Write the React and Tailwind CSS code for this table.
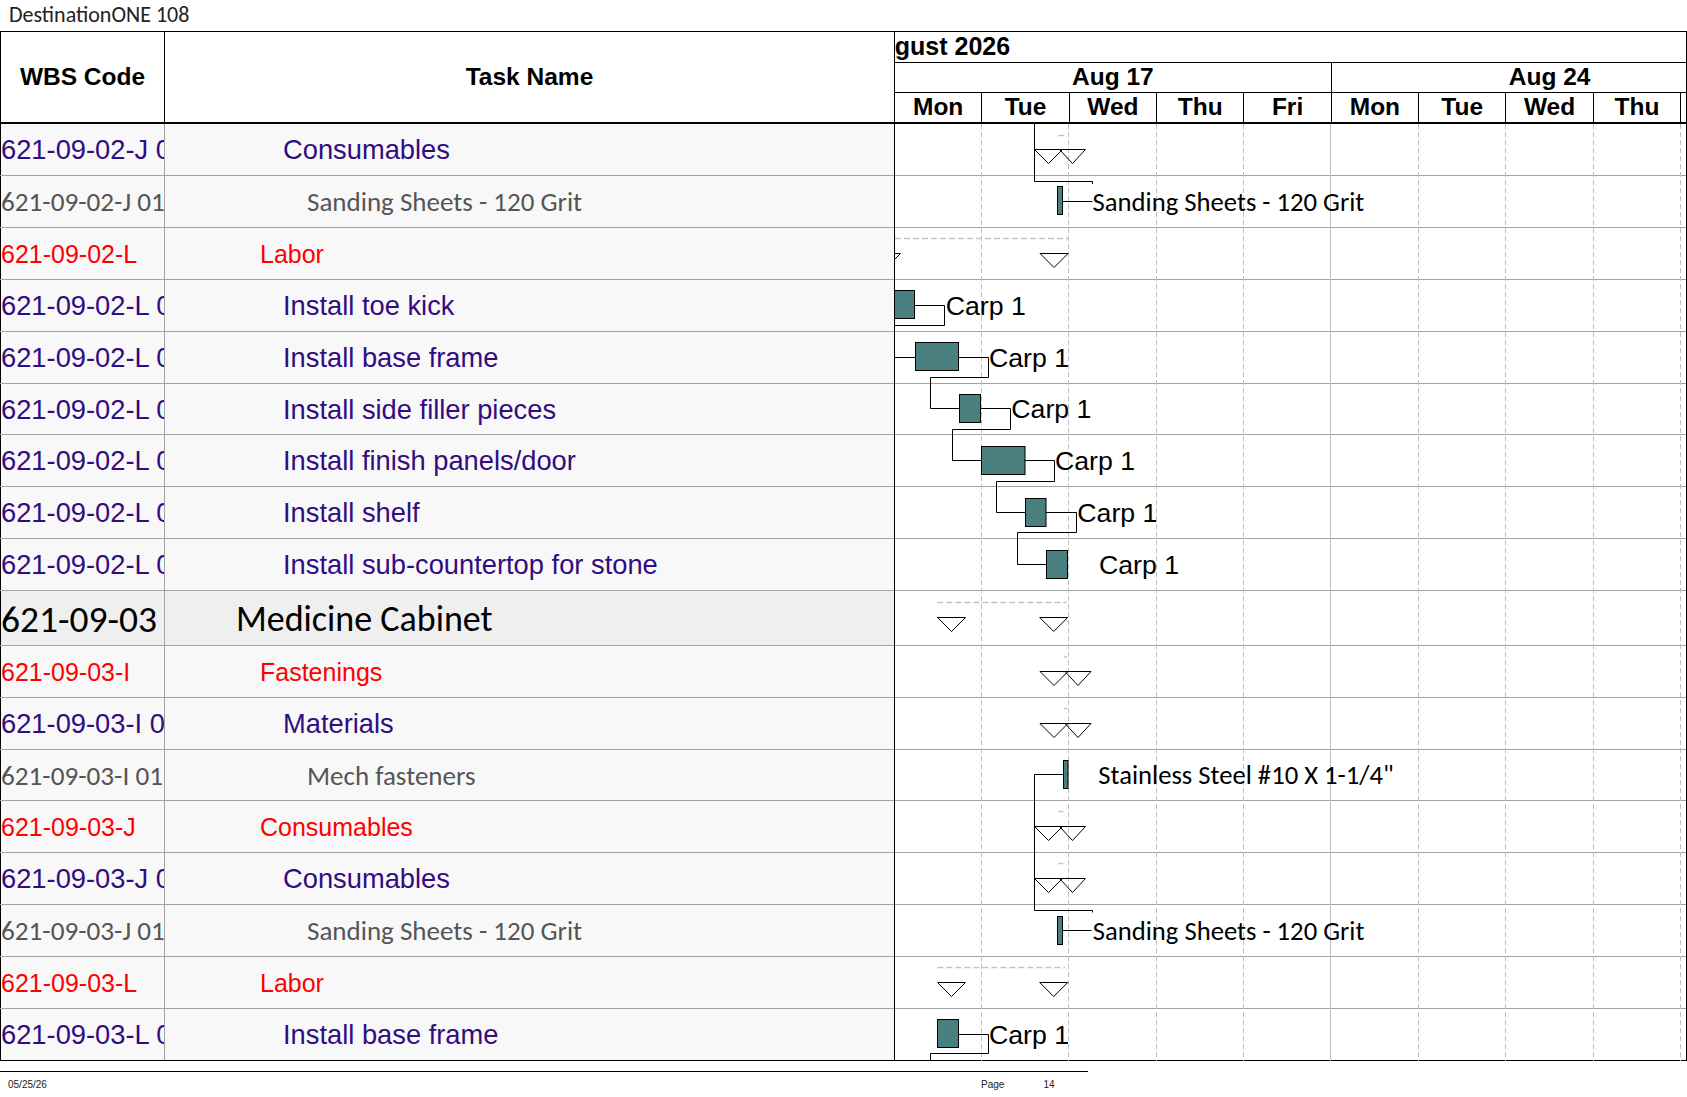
import React from "react";

const arial = "font-['Liberation_Sans',Arial,sans-serif]";
const calibri = "font-['Carlito','Lato',sans-serif]";

const kinds = {
  p: {
    text: `${arial} text-[27.3px] text-[#320c80]`,
    code: `${arial} text-[27.3px] text-[#320c80]`,
    pl: "pl-[118px]",
    bg: "bg-[#f8f8f8]",
  },
  r: {
    text: `${arial} text-[25px] text-[#ff0000]`,
    code: `${arial} text-[25px] text-[#ff0000]`,
    pl: "pl-[95px]",
    bg: "bg-[#f8f8f8]",
  },
  g: {
    text: `${calibri} text-[27px] text-[#555555]`,
    code: `${calibri} text-[27.2px] text-[#555555]`,
    pl: "pl-[142px]",
    bg: "bg-[#f8f8f8]",
  },
  m: {
    text: `${calibri} text-[36px] text-black`,
    code: `${calibri} text-[37.5px] text-black`,
    pl: "pl-[71px]",
    bg: "bg-[#efefef]",
  },
};

const rows = [
  { code: "621-09-02-J 01", name: "Consumables", k: "p", h: "h-[52px]" },
  { code: "621-09-02-J 01 01", name: "Sanding Sheets - 120 Grit", k: "g", h: "h-[52px]" },
  { code: "621-09-02-L", name: "Labor", k: "r", h: "h-[52px]" },
  { code: "621-09-02-L 01", name: "Install toe kick", k: "p", h: "h-[52px]" },
  { code: "621-09-02-L 02", name: "Install base frame", k: "p", h: "h-[52px]" },
  { code: "621-09-02-L 03", name: "Install side filler pieces", k: "p", h: "h-[51px]" },
  { code: "621-09-02-L 04", name: "Install finish panels/door", k: "p", h: "h-[52px]" },
  { code: "621-09-02-L 05", name: "Install shelf", k: "p", h: "h-[52px]" },
  { code: "621-09-02-L 06", name: "Install sub-countertop for stone", k: "p", h: "h-[52px]" },
  { code: "621-09-03", name: "Medicine Cabinet", k: "m", h: "h-[55px]" },
  { code: "621-09-03-I", name: "Fastenings", k: "r", h: "h-[52px]" },
  { code: "621-09-03-I 01", name: "Materials", k: "p", h: "h-[52px]" },
  { code: "621-09-03-I 01 01", name: "Mech fasteners", k: "g", h: "h-[51px]" },
  { code: "621-09-03-J", name: "Consumables", k: "r", h: "h-[52px]" },
  { code: "621-09-03-J 01", name: "Consumables", k: "p", h: "h-[52px]" },
  { code: "621-09-03-J 01 01", name: "Sanding Sheets - 120 Grit", k: "g", h: "h-[52px]" },
  { code: "621-09-03-L", name: "Labor", k: "r", h: "h-[52px]" },
  { code: "621-09-03-L 01", name: "Install base frame", k: "p", h: "h-[52px]" },
];

const days = ["Mon", "Tue", "Wed", "Thu", "Fri", "Mon", "Tue", "Wed", "Thu", "Fri"];
const gridX = [86.5, 173.5, 261.5, 348.5, 523.5, 610.5, 698.5, 785.5];

// summary marker
const Tri = ({ x, y, w = 28 }) => (
  <polygon points={`${x},${y} ${x + w},${y} ${x + w / 2},${y + 14}`} fill="none" stroke="#000" strokeWidth="1" />
);

const Bar = ({ x, y, w, h = 28 }) => (
  <rect x={x} y={y} width={w} height={h} fill="#4a7f7f" stroke="#000" strokeWidth="1" />
);

const Line = ({ pts }) => <polyline points={pts} fill="none" stroke="#000" strokeWidth="1" />;

const Dash = ({ x1, x2, y }) => (
  <line x1={x1} x2={x2} y1={y} y2={y} stroke="#c4c4c4" strokeWidth="1.5" strokeDasharray="6 3" />
);

const Carp = ({ x, y }) => (
  <text x={x} y={y} className={`${arial} text-[26.7px]`} fill="#000">
    Carp 1
  </text>
);

const Note = ({ x, y, children }) => (
  <text x={x} y={y} className={`${calibri} text-[26.67px]`} fill="#000">
    {children}
  </text>
);

const Chart = () => (
  <svg className="absolute left-0 top-0" width="791" height="937">
    {gridX.map((x) => (
      <line key={x} x1={x} x2={x} y1="0" y2="937" stroke="#bdbdbd" strokeWidth="1" strokeDasharray="5 3" />
    ))}
    <line x1="435.5" x2="435.5" y1="0" y2="937" stroke="#bdbdbd" strokeWidth="1" />

    {/* 621-09-02-J */}
    <Line pts="139.5,0 139.5,57.5 197.5,57.5 197.5,60" />
    <Dash x1={163} x2={169} y={11.5} />
    <Tri x={139.5} y={25.5} />
    <Tri x={164.5} y={25.5} w={26} />
    <Bar x={162.5} y={62.5} w={5} />
    <Line pts="167.5,77.5 197.5,77.5" />
    <Note x={197.6} y={86.7}>Sanding Sheets - 120 Grit</Note>

    {/* Labor */}
    <Dash x1={0} x2={173.5} y={114.5} />
    <Tri x={-22.5} y={129.5} />
    <Tri x={145} y={129.5} />

    <Bar x={-10} y={166.5} w={29.5} />
    <Line pts="19.5,181.5 49.5,181.5 49.5,201.5 -2,201.5" />
    <Carp x={50.7} y={191} />

    <Line pts="0,233.5 20.5,233.5" />
    <Bar x={20.5} y={218.5} w={43} />
    <Line pts="63.5,233.5 93.5,233.5 93.5,253.5 35.5,253.5 35.5,284.5 64.5,284.5" />
    <Carp x={94} y={243} />

    <Bar x={64.5} y={270.5} w={21} />
    <Line pts="85.5,284.5 115.5,284.5 115.5,305.5 57.5,305.5 57.5,336.5 86.5,336.5" />
    <Carp x={116.3} y={294} />

    <Bar x={86.5} y={322.5} w={43.5} />
    <Line pts="130,336.5 159.5,336.5 159.5,357.5 101.5,357.5 101.5,388.5 130.5,388.5" />
    <Carp x={160} y={346} />

    <Bar x={130.5} y={374.5} w={20.5} />
    <Line pts="151,388.5 181.5,388.5 181.5,408.5 122.5,408.5 122.5,440.5 151.5,440.5" />
    <Carp x={182.3} y={398} />

    <Bar x={151.5} y={426.5} w={21} />
    <Carp x={204} y={450} />

    {/* Medicine Cabinet */}
    <Dash x1={42.3} x2={171.7} y={478.5} />
    <Tri x={42.5} y={493.5} />
    <Tri x={144.7} y={493.5} />

    <Dash x1={169} x2={172} y={533} />
    <Tri x={145} y={547.5} />
    <Tri x={170} y={547.5} w={26} />

    <Dash x1={169} x2={172} y={584.5} />
    <Tri x={145} y={599.5} />
    <Tri x={170} y={599.5} w={26} />

    <Line pts="139.5,650.5 168.5,650.5" />
    <Bar x={168.5} y={636.5} w={4.5} />
    <Line pts="139.5,650.5 139.5,786.5 197.5,786.5 197.5,788.5" />
    <Note x={203.3} y={660.3}>Stainless Steel #10 X 1-1/4"</Note>

    <Dash x1={163.3} x2={168.3} y={687.5} />
    <Tri x={139.5} y={702.5} />
    <Tri x={164.5} y={702.5} w={26} />

    <Dash x1={163.3} x2={168.3} y={739.5} />
    <Tri x={139.5} y={754.5} />
    <Tri x={164.5} y={754.5} w={26} />

    <Bar x={162.5} y={792.5} w={5} />
    <Line pts="167.5,806.5 196.5,806.5" />
    <Note x={197.7} y={816}>Sanding Sheets - 120 Grit</Note>

    <Dash x1={42.3} x2={170.3} y={843.5} />
    <Tri x={42.5} y={858.5} />
    <Tri x={144.7} y={858.5} />

    <Bar x={42.5} y={895.5} w={21} />
    <Line pts="63.5,910.5 93.5,910.5 93.5,929.5 35.5,929.5 35.5,937" />
    <Carp x={94} y={920} />
  </svg>
);

export default function App() {
  return (
    <div className="w-[1687px] h-[1097px] bg-white overflow-hidden text-black">
      <div className={`h-[31px] pl-[9px] pt-[3px] text-[22px] leading-[24px] text-[#222] ${calibri}`}>
        DestinationONE 108
      </div>

      {/* header */}
      <div className={`flex h-[93px] border-t border-b-2 border-black font-bold ${arial}`}>
        <div className="w-[165px] border-l border-r border-black flex items-center justify-center text-[24.5px]">
          WBS Code
        </div>
        <div className="w-[729px] flex items-center justify-center text-[24.5px]">Task Name</div>
        <div className="w-[793px] border-l border-r border-black overflow-hidden flex flex-col">
          <div className="h-[31px] border-b border-black flex items-center whitespace-nowrap text-[25px]">
            <span className="-ml-[33.5px]">August 2026</span>
          </div>
          <div className="h-[30px] border-b border-black flex w-[873.5px] text-[24.5px]">
            <div className="w-[436.75px] shrink-0 border-r border-black flex items-center justify-center">Aug 17</div>
            <div className="w-[436.75px] shrink-0 border-r border-black flex items-center justify-center">Aug 24</div>
          </div>
          <div className="h-[29px] flex w-[873.5px] text-[24.5px]">
            {days.map((d, i) => (
              <div key={i} className="w-[87.35px] shrink-0 border-r border-black flex items-center justify-center">
                {d}
              </div>
            ))}
          </div>
        </div>
      </div>

      {/* body */}
      <div className="flex">
        <div className="w-[894px]">
          {rows.map((r, i) => {
            const k = kinds[r.k];
            const last = i === rows.length - 1;
            return (
              <div
                key={i}
                className={`flex ${r.h} ${k.bg} border-b ${last ? "border-black" : "border-[#a3a3a3]"} whitespace-nowrap`}
              >
                <div className={`w-[165px] shrink-0 pt-[2px] border-l border-l-black border-r border-r-[#a3a3a3] overflow-hidden flex items-center ${k.code}`}>
                  {r.code}
                </div>
                <div className={`flex-1 pt-[2px] flex items-center ${k.pl} ${k.text}`}>{r.name}</div>
              </div>
            );
          })}
        </div>
        <div className="w-[793px] border-l border-r border-black relative bg-white">
          {rows.map((r, i) => (
            <div
              key={i}
              className={`${r.h} border-b ${i === rows.length - 1 ? "border-black" : "border-[#a3a3a3]"}`}
            />
          ))}
          <Chart />
        </div>
      </div>

      {/* footer */}
      <div className="w-[1088px] mt-[10px] border-t border-black">
        <div className={`flex mt-[7px] text-[10px] leading-[12px] text-[#222] ${arial}`}>
          <span className="w-[981px] pl-[8px]">05/25/26</span>
          <span className="w-[62.5px]">Page</span>
          <span>14</span>
        </div>
      </div>
    </div>
  );
}
